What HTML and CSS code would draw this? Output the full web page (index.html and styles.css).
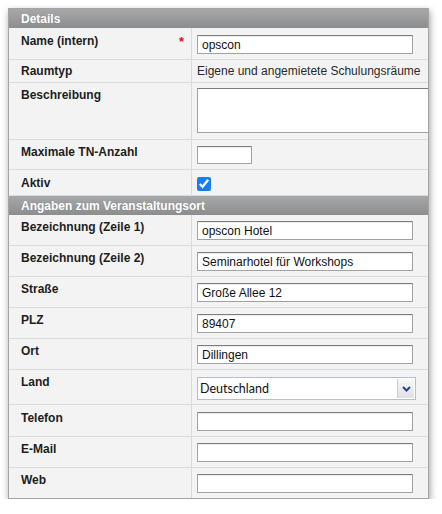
FILE: index.html
```html
<!DOCTYPE html>
<html lang="de">
<head>
<meta charset="utf-8">
<title>Raum</title>
<link rel="stylesheet" href="styles.css">
</head>
<body>
<div class="form">
  <div class="section-head">Details</div>
  <div class="row row-name">
    <div class="label">Name (intern)<span class="req">*</span></div>
    <div class="value"><input class="text" type="text" value="opscon"></div>
  </div>
  <div class="row row-plain">
    <div class="label">Raumtyp</div>
    <div class="value">Eigene und angemietete Schulungsräume</div>
  </div>
  <div class="row row-area">
    <div class="label">Beschreibung</div>
    <div class="value"><textarea class="area"></textarea></div>
  </div>
  <div class="row row-small">
    <div class="label">Maximale TN-Anzahl</div>
    <div class="value"><input class="text short" type="text" value=""></div>
  </div>
  <div class="row row-check">
    <div class="label">Aktiv</div>
    <div class="value"><input class="check" type="checkbox" checked></div>
  </div>
  <div class="section-head">Angaben zum Veranstaltungsort</div>
  <div class="row">
    <div class="label">Bezeichnung (Zeile 1)</div>
    <div class="value"><input class="text" type="text" value="opscon Hotel"></div>
  </div>
  <div class="row">
    <div class="label">Bezeichnung (Zeile 2)</div>
    <div class="value"><input class="text" type="text" value="Seminarhotel für Workshops"></div>
  </div>
  <div class="row">
    <div class="label">Straße</div>
    <div class="value"><input class="text" type="text" value="Große Allee 12"></div>
  </div>
  <div class="row">
    <div class="label">PLZ</div>
    <div class="value"><input class="text" type="text" value="89407"></div>
  </div>
  <div class="row">
    <div class="label">Ort</div>
    <div class="value"><input class="text" type="text" value="Dillingen"></div>
  </div>
  <div class="row row-land">
    <div class="label">Land</div>
    <div class="value">
      <div class="select">
        <select class="select-box"><option>Deutschland</option></select>
        <span class="select-arrow"><svg width="9" height="6" viewBox="0 0 9 6"><path d="M1 1 L4.5 4.5 L8 1" fill="none" stroke="#27468c" stroke-width="2"/></svg></span>
      </div>
    </div>
  </div>
  <div class="row row-tel">
    <div class="label">Telefon</div>
    <div class="value"><input class="text" type="text" value=""></div>
  </div>
  <div class="row">
    <div class="label">E-Mail</div>
    <div class="value"><input class="text" type="text" value=""></div>
  </div>
  <div class="row row-last">
    <div class="label">Web</div>
    <div class="value"><input class="text" type="text" value=""></div>
  </div>
</div>
</body>
</html>
```
FILE: styles.css
```css
body {
  margin: 0;
  background: #fff;
  font-family: "Liberation Sans", Arial, sans-serif;
  font-size: 12px;
  line-height: 14px;
  color: #1a1a1a;
}

.form {
  margin: 8px 0 0 8px;
  width: 419px;
  border: 1px solid #a4a4a4;
  background: #f3f3f3;
  box-shadow: 1px 3px 7px rgba(0, 0, 0, 0.38);
  overflow: hidden;
}

.section-head {
  height: 19px;
  box-sizing: border-box;
  padding: 3px 12px 2px;
  background: linear-gradient(#a6a8aa, #8b8d8f);
  color: #fff;
  font-weight: bold;
  line-height: 14px;
  text-shadow: 0 0 1px rgba(0, 0, 0, 0.15);
}

.row {
  display: grid;
  grid-template-columns: 183px 1fr;
  border-bottom: 1px solid #dbdbdb;
}

.row-last {
  border-bottom: 0;
}

.label {
  display: flex;
  justify-content: space-between;
  box-sizing: border-box;
  padding: 5px 7px 0 12px;
  border-right: 1px solid #dbdbdb;
  font-weight: bold;
  color: #1e1e1e;
}

.req {
  color: #e01010;
  font-size: 13px;
  line-height: 14px;
  margin-top: 1px;
}

.value {
  padding: 6px 5px 5px;
}

.row-name .value {
  padding: 7px 5px 5px;
}

.row-name .label {
  padding-top: 6px;
}

.row-plain .label,
.row-plain .value {
  padding-top: 4px;
  padding-bottom: 4px;
}

.row-plain .value {
  color: #2a2a2a;
}

.row-area .value {
  padding: 5px 0 6px 5px;
}

.row-check .value {
  padding: 7px 5px 4px;
}

.row-check .label {
  padding-top: 6px;
}

.row-land .value {
  padding: 7px 5px 4px;
}

.row-tel .value {
  padding: 7px 5px 5px;
}

.row-tel .label {
  padding-top: 6px;
}

.text {
  display: block;
  width: 216px;
  height: 19px;
  box-sizing: border-box;
  margin: 0;
  padding: 0 4px;
  border: 1px solid #a2a2a2;
  border-top-color: #7c7c7c;
  border-radius: 1px;
  background: #fff;
  box-shadow: inset 0 1px 1px rgba(0, 0, 0, 0.08);
  font-family: "Liberation Sans", Arial, sans-serif;
  font-size: 12px;
  color: #111;
  outline: none;
}

.text.short {
  width: 55px;
  height: 18px;
}

.area {
  display: block;
  width: 236px;
  height: 45px;
  box-sizing: border-box;
  margin: 0;
  padding: 2px 4px;
  border: 1px solid #a2a2a2;
  border-top-color: #7c7c7c;
  background: #fff;
  resize: none;
  font-family: "Liberation Sans", Arial, sans-serif;
  font-size: 12px;
}

.check {
  display: block;
  width: 14px;
  height: 14px;
  margin: 0;
  accent-color: #1a7cf2;
}

.select {
  display: flex;
  width: 219px;
  height: 23px;
  box-sizing: border-box;
  border: 1px solid #b3bfcd;
  background: #fff;
}

.select-box {
  flex: 1;
  appearance: none;
  -webkit-appearance: none;
  border: 0;
  margin: 0;
  padding: 0 2px;
  background: transparent;
  font-family: Lato, "Liberation Sans", sans-serif;
  font-size: 12.5px;
  color: #111;
  outline: none;
}

.select-arrow {
  display: flex;
  align-items: center;
  justify-content: center;
  width: 16px;
  margin: 1px;
  border-left: 1px solid #c6ced8;
  background: linear-gradient(#f8f8f8, #dde1e6);
}
```
